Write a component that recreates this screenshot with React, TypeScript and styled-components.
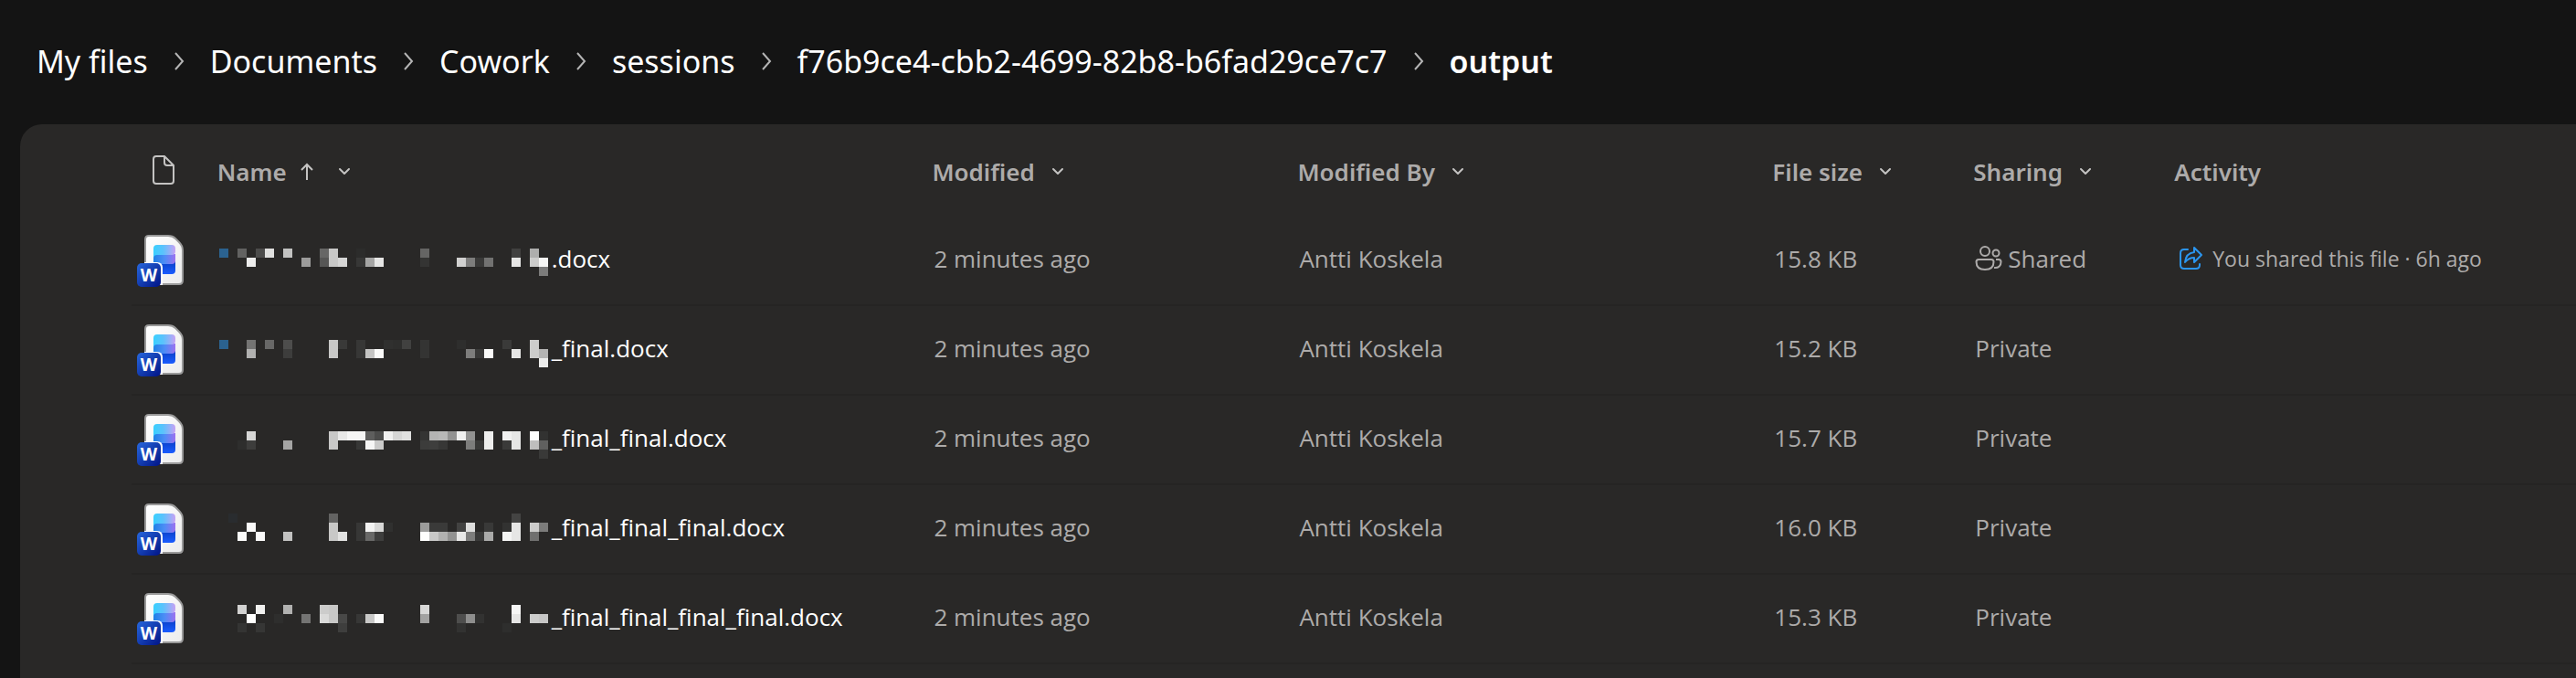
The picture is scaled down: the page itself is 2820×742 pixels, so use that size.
import React from "react";
import styled, { createGlobalStyle } from "styled-components";

const Global = createGlobalStyle`
  *, *::before, *::after { box-sizing: border-box; }
  body { margin: 0; background: #141414; font-family: "Open Sans", "Noto Sans", sans-serif; }
`;

const Page = styled.div`
  display: flex;
  flex-direction: column;
  min-height: 100vh;
  background: #141414;
`;

const Breadcrumb = styled.nav`
  height: 136px;
  padding: 0 40px 2px;
  display: flex;
  align-items: center;
  font-family: "Noto Sans", "Open Sans", sans-serif;
`;

const Trail = styled.ol`
  list-style: none;
  margin: 0;
  padding: 0;
  display: flex;
  align-items: center;
`;

const Crumb = styled.li`
  display: flex;
  align-items: center;
  font-size: 34px;
  line-height: 48px;
  color: #fff;
  white-space: nowrap;
`;

const CrumbLink = styled.a<{ $current?: boolean }>`
  color: inherit;
  text-decoration: none;
  font-weight: ${(p) => (p.$current ? 600 : 400)};
`;

const Separator = styled.svg`
  width: 12px;
  height: 20px;
  margin: 0 28px;
  flex: none;
`;

const Panel = styled.main`
  flex: 1;
  margin-left: 22px;
  padding-left: 122px;
  background: #292827;
  border-top-left-radius: 24px;
`;

const FileTable = styled.table`
  width: 100%;
  border-collapse: collapse;
  table-layout: fixed;
`;

const Col = styled.col<{ $share?: string }>`
  width: ${(p) => p.$share ?? "auto"};
`;

const HeadCell = styled.th`
  height: 100px;
  padding: 4px 0 0;
  text-align: left;
  font-weight: 600;
`;

const IconHeadCell = styled(HeadCell)`
  padding: 0;
`;

const HeadButton = styled.button`
  display: flex;
  align-items: center;
  padding: 0;
  border: 0;
  background: none;
  color: #adabaa;
  font: 600 26px/36px "Noto Sans", sans-serif;
  white-space: nowrap;
`;

const Chevron = styled.svg`
  width: 14px;
  height: 10px;
  margin-left: 18px;
`;

const SortArrow = styled.svg`
  width: 16px;
  height: 20px;
  margin: 0 8px 0 14px;
`;

const DocGlyph = styled.svg`
  display: block;
  width: 26px;
  height: 34px;
  margin-left: 22px;
`;

const Row = styled.tr`
  border-bottom: 2px solid #252423;
`;

const Cell = styled.td`
  height: 98px;
  padding: 0 0 4px 2px;
  color: #adabaa;
  font-size: 26px;
  line-height: 36px;
  white-space: nowrap;
`;

const IconCell = styled(Cell)`
  padding: 0 0 0 6px;
`;

const WordGlyph = styled.svg`
  display: block;
  width: 52px;
  height: 58px;
`;

const NameLink = styled.a`
  display: flex;
  align-items: center;
  color: #fff;
  text-decoration: none;
`;

const Mosaic = styled.svg`
  width: 360px;
  height: 54px;
  margin-right: 4px;
  flex: none;
`;

const Inline = styled.span<{ $small?: boolean }>`
  display: flex;
  align-items: center;
  gap: ${(p) => (p.$small ? 10 : 6)}px;
  font-size: ${(p) => (p.$small ? 23 : 26)}px;
`;

const Icon = styled.svg`
  width: 30px;
  height: 30px;
  flex: none;
`;

type Block = [column: number, row: number, color: string];

const grey = (column: number, row: number, level: number): Block => [
  column,
  row,
  `rgb(${level},${level},${level - 1})`,
];

interface FileRow {
  suffix: string;
  size: string;
  shared?: boolean;
  top: number;
  blocks: Block[];
}

const files: FileRow[] = [
  {
    suffix: ".docx",
    size: "15.8 KB",
    shared: true,
    top: 6,
    blocks: [
      [0, 1, "#2b628f"], grey(2, 1, 98), grey(4, 1, 76), grey(5, 1, 224), grey(7, 1, 194), grey(11, 1, 103),
      grey(12, 1, 200), grey(15, 1, 44), grey(22, 1, 101), grey(32, 1, 65), grey(34, 1, 174),
      grey(3, 2, 237), grey(9, 2, 156), grey(11, 2, 86), grey(12, 2, 200), grey(13, 2, 214), grey(15, 2, 55),
      grey(16, 2, 165), grey(17, 2, 230), grey(22, 2, 52), grey(26, 2, 209), grey(27, 2, 125), grey(28, 2, 57),
      grey(29, 2, 114), grey(32, 2, 230), grey(34, 2, 204), grey(35, 2, 246), grey(35, 3, 124),
    ],
  },
  {
    suffix: "_final.docx",
    size: "15.2 KB",
    top: 8,
    blocks: [
      [0, 1, "#2b628f"], grey(3, 1, 116), grey(5, 1, 104), grey(7, 1, 77), grey(12, 1, 200), grey(13, 1, 57),
      grey(15, 1, 55), grey(18, 1, 48), grey(19, 1, 46), grey(20, 1, 65), grey(22, 1, 52), grey(26, 1, 46),
      grey(31, 1, 58), grey(34, 1, 204), grey(3, 2, 177), grey(7, 2, 61), grey(12, 2, 200), grey(15, 2, 55),
      grey(16, 2, 196), grey(17, 2, 250), grey(22, 2, 52), grey(27, 2, 125), grey(28, 2, 57), grey(29, 2, 250),
      grey(32, 2, 230), grey(34, 2, 204), grey(35, 2, 180), grey(35, 3, 236),
    ],
  },
  {
    suffix: "_final_final.docx",
    size: "15.7 KB",
    top: 10,
    blocks: [
      grey(3, 1, 214), grey(12, 1, 200), grey(13, 1, 232), grey(14, 1, 246), grey(15, 1, 246), grey(16, 1, 94),
      grey(17, 1, 76), grey(18, 1, 240), grey(19, 1, 214), grey(20, 1, 224), grey(22, 1, 52), grey(23, 1, 180),
      grey(24, 1, 184), grey(25, 1, 146), grey(26, 1, 240), grey(27, 1, 146), grey(29, 1, 238), grey(31, 1, 240),
      grey(32, 1, 230), grey(34, 1, 254), grey(35, 1, 50), grey(2, 2, 46), grey(3, 2, 61), grey(7, 2, 165),
      grey(12, 2, 200), grey(15, 2, 55), grey(16, 2, 246), grey(17, 2, 202), grey(22, 2, 60), grey(23, 2, 62),
      grey(24, 2, 55), grey(27, 2, 125), grey(28, 2, 57), grey(29, 2, 238), grey(31, 2, 58), grey(32, 2, 230),
      grey(34, 2, 190), grey(35, 2, 96), grey(35, 3, 57),
    ],
  },
  {
    suffix: "_final_final_final.docx",
    size: "16.0 KB",
    top: 12,
    blocks: [
      [1, 0, "#292c2f"], grey(12, 0, 99), grey(32, 0, 68), grey(3, 1, 250), grey(12, 1, 200), grey(15, 1, 55),
      grey(16, 1, 243), grey(17, 1, 216), grey(18, 1, 48), grey(22, 1, 156), grey(23, 1, 58), grey(24, 1, 58),
      grey(26, 1, 66), grey(27, 1, 222), grey(29, 1, 57), grey(31, 1, 50), grey(32, 1, 230), grey(34, 1, 204),
      grey(35, 1, 124), grey(2, 2, 250), grey(4, 2, 250), grey(7, 2, 194), grey(12, 2, 200), grey(13, 2, 226),
      grey(15, 2, 55), grey(16, 2, 104), grey(17, 2, 62), grey(22, 2, 254), grey(23, 2, 200), grey(24, 2, 177),
      grey(25, 2, 146), grey(26, 2, 232), grey(27, 2, 125), grey(28, 2, 57), grey(29, 2, 170), grey(31, 2, 244),
      grey(32, 2, 230), grey(34, 2, 112),
    ],
  },
  {
    suffix: "_final_final_final_final.docx",
    size: "15.3 KB",
    top: 4,
    blocks: [
      grey(2, 1, 210), grey(4, 1, 240), grey(7, 1, 177), grey(11, 1, 204), grey(12, 1, 200), grey(22, 1, 216),
      grey(32, 1, 246), grey(3, 2, 255), grey(6, 2, 46), grey(9, 2, 116), grey(11, 2, 218), grey(12, 2, 200),
      grey(13, 2, 72), grey(15, 2, 55), grey(16, 2, 200), grey(17, 2, 250), grey(22, 2, 162), grey(26, 2, 78),
      grey(27, 2, 142), grey(28, 2, 50), grey(32, 2, 230), grey(34, 2, 204), grey(35, 2, 198), grey(2, 3, 52),
      grey(4, 3, 54), grey(13, 3, 62), grey(26, 3, 50), grey(31, 3, 46),
    ],
  },
];

const DownChevron = () => (
  <Chevron viewBox="0 0 14 10" fill="none" stroke="#c4c3c2" strokeWidth="2" aria-hidden="true">
    <path d="M2 2l5 5 5-5" strokeLinecap="round" strokeLinejoin="round" />
  </Chevron>
);

const WordIcon = () => (
  <WordGlyph viewBox="0 0 52 58" role="img" aria-label="Word document">
    <defs>
      <linearGradient id="sheet" x1="0" y1="0" x2="1" y2="1">
        <stop offset="0" stopColor="#fff" />
        <stop offset="1" stopColor="#ececec" />
      </linearGradient>
      <linearGradient id="top" x1="0" y1="0" x2="1" y2="0">
        <stop offset="0" stopColor="#38d0ff" />
        <stop offset=".45" stopColor="#5cc2fc" />
        <stop offset="1" stopColor="#c6a2f4" />
      </linearGradient>
      <linearGradient id="middle" x1="0" y1="0" x2="1" y2="0">
        <stop offset="0" stopColor="#1f80e6" />
        <stop offset=".5" stopColor="#4c8df6" />
        <stop offset="1" stopColor="#9c72f0" />
      </linearGradient>
      <linearGradient id="bottom" x1="0" y1="0" x2="0" y2="1">
        <stop offset="0" stopColor="#0a3fc4" />
        <stop offset="1" stopColor="#1a5cff" />
      </linearGradient>
      <linearGradient id="badge" x1="0" y1="0" x2="1" y2="1">
        <stop offset="0" stopColor="#2767dd" />
        <stop offset="1" stopColor="#001385" />
      </linearGradient>
    </defs>
    <path d="M13 2h21q5 0 8 3l4 4q4 4 4 9v33q0 4-4 4H13q-4 0-4-4V6q0-4 4-4z" fill="url(#sheet)" stroke="#999" strokeWidth="2" />
    <path d="M18 30h24v10q0 4-4 4H18z" fill="url(#bottom)" />
    <path d="M18 22h24v7q0 4-4 4H18z" fill="url(#middle)" />
    <path d="M22 12h16q4 0 4 4v3q0 4-4 4H22q-4 0-4 4V16q0-4 4-4z" fill="url(#top)" />
    <path d="M8 31h14q6 0 6 6v19H8z" fill="#fff" />
    <rect x="0" y="32" width="26" height="26" rx="5" fill="url(#badge)" />
    <text x="13" y="52" textAnchor="middle" fill="#fff" fontFamily="Open Sans, sans-serif" fontWeight="700" fontSize="19">W</text>
  </WordGlyph>
);

const PeopleIcon = () => (
  <Icon viewBox="0 0 30 30" fill="none" stroke="#adabaa" strokeWidth="2" aria-hidden="true">
    <circle cx="11" cy="7" r="5" />
    <circle cx="23" cy="9" r="3.500" />
    <path d="M4 16h14q2.500 0 2.500 2.500C20.500 24 17 27 11 27S1.500 24 1.500 18.500Q1.500 16 4 16z" />
    <path d="M23 16h3q2.500 0 2.500 2.500c0 4-2.500 7-7.500 6.500" />
  </Icon>
);

const ShareIcon = () => (
  <Icon viewBox="0 0 30 30" fill="none" stroke="#2b95ee" strokeWidth="2" strokeLinejoin="round" strokeLinecap="round" aria-hidden="true">
    <path d="M13 5H9Q5 5 5 9v13q0 4 4 4h13q4 0 4-4v-1" />
    <path d="M20 3l8 8-8 8v-5q-6 0-10 5 1-10 10-11z" />
  </Icon>
);

const crumbs = ["My files", "Documents", "Cowork", "sessions", "f76b9ce4-cbb2-4699-82b8-b6fad29ce7c7", "output"];
const headings = ["Modified", "Modified By", "File size", "Sharing"];

export default function App() {
  return (
    <Page>
      <Global />
      <Breadcrumb aria-label="Breadcrumb">
        <Trail>
          {crumbs.map((crumb, i) => (
            <Crumb key={crumb}>
              {i > 0 && (
                <Separator viewBox="0 0 12 20" fill="none" stroke="#b5b5b5" strokeWidth="2" aria-hidden="true">
                  <path d="M2 1l8 9-8 9" />
                </Separator>
              )}
              <CrumbLink href="#" $current={i === crumbs.length - 1} aria-current={i === crumbs.length - 1 ? "page" : undefined}>
                {crumb}
              </CrumbLink>
            </Crumb>
          ))}
        </Trail>
      </Breadcrumb>
      <Panel>
        <FileTable>
          <colgroup>
            <Col $share="3.5%" />
            <Col $share="29.25%" />
            <Col $share="14.95%" />
            <Col $share="19.43%" />
            <Col $share="8.22%" />
            <Col $share="8.22%" />
            <Col />
          </colgroup>
          <thead>
            <tr>
              <IconHeadCell scope="col">
                <DocGlyph viewBox="0 0 26 34" fill="none" stroke="#c4c3c2" strokeWidth="2" strokeLinejoin="round" role="img" aria-label="File type">
                  <path d="M5 2h9l10 10v17q0 3-3 3H5q-3 0-3-3V5q0-3 3-3z" />
                  <path d="M14 2v7q0 3 3 3h7" />
                </DocGlyph>
              </IconHeadCell>
              <HeadCell scope="col" aria-sort="ascending">
                <HeadButton type="button">
                  Name
                  <SortArrow viewBox="0 0 16 20" fill="none" stroke="#c4c3c2" strokeWidth="2" aria-hidden="true">
                    <path d="M8 19V2M2 8l6-6 6 6" />
                  </SortArrow>
                  <DownChevron />
                </HeadButton>
              </HeadCell>
              {headings.map((heading) => (
                <HeadCell scope="col" key={heading}>
                  <HeadButton type="button">
                    {heading}
                    <DownChevron />
                  </HeadButton>
                </HeadCell>
              ))}
              <HeadCell scope="col">
                <HeadButton type="button">Activity</HeadButton>
              </HeadCell>
            </tr>
          </thead>
          <tbody>
            {files.map((file) => (
              <Row key={file.suffix}>
                <IconCell><WordIcon /></IconCell>
                <Cell>
                  <NameLink href="#">
                    <Mosaic viewBox="0 0 360 54" shapeRendering="crispEdges" aria-hidden="true">
                      <g transform={`translate(0 ${file.top})`}>
                        {file.blocks.map(([column, row, color]) => (
                          <rect key={`${column}-${row}`} x={column * 10} y={row * 10} width="10" height="10" fill={color} />
                        ))}
                      </g>
                    </Mosaic>
                    {file.suffix}
                  </NameLink>
                </Cell>
                <Cell>2 minutes ago</Cell>
                <Cell>Antti Koskela</Cell>
                <Cell>{file.size}</Cell>
                <Cell>
                  {file.shared ? <Inline><PeopleIcon />Shared</Inline> : "Private"}
                </Cell>
                <Cell>
                  {file.shared && <Inline $small><ShareIcon />You shared this file · 6h ago</Inline>}
                </Cell>
              </Row>
            ))}
          </tbody>
        </FileTable>
      </Panel>
    </Page>
  );
}
